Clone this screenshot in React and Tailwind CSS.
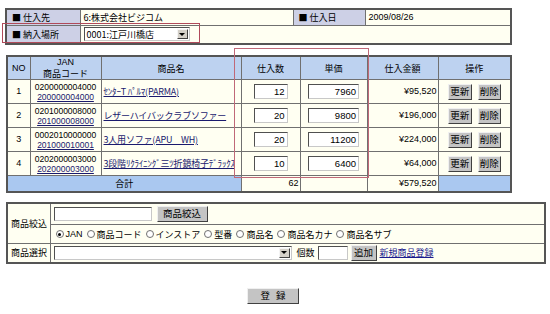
import React from "react";

const jp = { fontFamily: "'Noto Sans CJK JP', 'Liberation Sans', sans-serif" };

const rows = [
  { no: 1, jan: "0200000004000", code: "200000004000", name: "ｾﾝﾀｰT ﾊﾟﾙﾏ(PARMA)", qty: 12, price: 7960, amount: "¥95,520" },
  { no: 2, jan: "0201000008000", code: "201000008000", name: "レザーハイバックラブソファー", qty: 20, price: 9800, amount: "¥196,000" },
  { no: 3, jan: "0002010000000", code: "201000010001", name: "3人用ソファ(APU　WH)", qty: 20, price: 11200, amount: "¥224,000" },
  { no: 4, jan: "0202000003000", code: "202000003000", name: "3段階ﾘｸﾗｲﾆﾝｸﾞ三ﾂ折鏡椅子ﾃﾞﾗｯｸｽ", qty: 10, price: 6400, amount: "¥64,000" },
];

function Btn({ children, className = "" }) {
  return (
    <span
      className={`inline-flex items-center justify-center bg-[#c4c4c4] border border-t-[#f0f0f0] border-l-[#f0f0f0] border-r-[#404040] border-b-[#404040] text-[9.5px] leading-none text-black ${className}`}
    >
      {children}
    </span>
  );
}

function TextBox({ value = "", className = "" }) {
  return (
    <span
      className={`inline-flex items-center justify-end pr-[2px] bg-white border border-t-[#505050] border-l-[#505050] border-r-[#c8c8c8] border-b-[#c8c8c8] text-[9.5px] leading-none font-['Liberation_Sans'] ${className}`}
    >
      {value}
    </span>
  );
}

function SelectBox({ value, className = "" }) {
  return (
    <span
      className={`inline-flex items-center justify-between bg-white border border-t-[#505050] border-l-[#505050] border-r-[#c8c8c8] border-b-[#c8c8c8] text-[9px] leading-none ${className}`}
    >
      <span className="pl-[2px]">{value}</span>
      <span className="w-[11px] h-[10px] mr-[1px] bg-[#d4d0c8] border border-t-[#f4f4f4] border-l-[#f4f4f4] border-r-[#404040] border-b-[#404040] flex items-center justify-center">
        <span className="w-0 h-0 border-l-[3px] border-r-[3px] border-t-[3px] border-l-transparent border-r-transparent border-t-black" />
      </span>
    </span>
  );
}

function Radio({ checked, label }) {
  return (
    <span className="inline-flex items-center gap-[2px] mr-[4px] align-middle">
      <span className="w-[8px] h-[8px] rounded-full bg-white border border-[#707070] flex items-center justify-center">
        {checked && <span className="w-[3px] h-[3px] rounded-full bg-black" />}
      </span>
      <span>{label}</span>
    </span>
  );
}

const lbl = "bg-[#cdd0e6] border border-[#707070] px-[5px] py-0 text-left whitespace-nowrap";
const val = "bg-[#fffff2] border border-[#707070] px-[3px] py-0 text-left whitespace-nowrap";
const th = "bg-[#bdd2f0] border border-[#707070] p-0 font-normal text-center";
const td = "bg-[#fffff2] border border-[#707070] p-0";

export default function App() {
  return (
    <div className="relative w-[550px] h-[314px] bg-white text-[9px] leading-[11px] text-black overflow-hidden" style={jp}>
      <div className="pt-[8px] pl-[5px]">
        <table className="table-fixed border-collapse w-[505px] border-2 border-[#555]">
          <colgroup>
            <col className="w-[74px]" />
            <col className="w-[213px]" />
            <col className="w-[72px]" />
            <col className="w-[146px]" />
          </colgroup>
          <tbody>
            <tr className="h-[16px]">
              <td className={lbl}>■ 仕入先</td>
              <td className={val}>6:株式会社ビジコム</td>
              <td className={lbl}>■ 仕入日</td>
              <td className={`${val} font-['Liberation_Sans']`}>2009/08/26</td>
            </tr>
            <tr className="h-[19px]">
              <td className={lbl}>■ 納入場所</td>
              <td className={val} colSpan={3}>
                <SelectBox value="0001:江戸川橋店" className="w-[106px] h-[14px] align-middle" />
              </td>
            </tr>
          </tbody>
        </table>
      </div>

      <div className="pt-[10px] pl-[6px]">
        <table className="table-fixed border-collapse w-[504px] border-2 border-[#555]">
          <colgroup>
            <col className="w-[23px]" />
            <col className="w-[71px]" />
            <col className="w-[140px]" />
            <col className="w-[59px]" />
            <col className="w-[67px]" />
            <col className="w-[71px]" />
            <col className="w-[73px]" />
          </colgroup>
          <thead>
            <tr className="h-[22px]">
              <th className={`${th} font-['Liberation_Sans']`}>NO</th>
              <th className={`${th} leading-[11px]`}>
                <div className="font-['Liberation_Sans']">JAN</div>
                <div>商品コード</div>
              </th>
              <th className={th}>商品名</th>
              <th className={th}>仕入数</th>
              <th className={th}>単価</th>
              <th className={th}>仕入金額</th>
              <th className={th}>操作</th>
            </tr>
          </thead>
          <tbody>
            {rows.map((r) => (
              <tr key={r.no} className="h-[24px]">
                <td className={`${td} text-center font-['Liberation_Sans']`}>{r.no}</td>
                <td className={`${td} text-center text-[8.5px] leading-[10px] font-['Liberation_Sans']`}>
                  {r.jan}
                  <br />
                  <span className="underline text-[#1a1a6e]">{r.code}</span>
                </td>
                <td className={`${td} px-[2px] whitespace-nowrap overflow-hidden`}>
                  <span className="underline text-[#1a1a6e] text-[9px] tracking-[-0.2px]">{r.name}</span>
                </td>
                <td className={`${td} text-center`}>
                  <TextBox value={r.qty} className="w-[34px] h-[15px] align-middle" />
                </td>
                <td className={`${td} text-center`}>
                  <TextBox value={r.price} className="w-[51px] h-[15px] align-middle" />
                </td>
                <td className={`${td} text-right pr-[1px] font-['Liberation_Sans']`}>{r.amount}</td>
                <td className={`${td} text-center`}>
                  <span className="inline-flex gap-[6px] align-middle">
                    <Btn className="w-[24px] h-[16px]">更新</Btn>
                    <Btn className="w-[23px] h-[16px]">削除</Btn>
                  </span>
                </td>
              </tr>
            ))}
            <tr className="h-[16px]">
              <td className="bg-[#aac8f0] border border-[#707070] p-0 text-center" colSpan={3}>
                合計
              </td>
              <td className={`${td} text-right pr-[1px] font-['Liberation_Sans']`}>62</td>
              <td className={td}></td>
              <td className={`${td} text-right pr-[1px] font-['Liberation_Sans']`}>¥579,520</td>
              <td className="bg-[#aac8f0] border border-[#707070] p-0"></td>
            </tr>
          </tbody>
        </table>
      </div>

      <div className="pt-[9px] pl-[6px]">
        <table className="table-fixed border-collapse w-[538px] border-2 border-[#555]">
          <colgroup>
            <col className="w-[43px]" />
            <col className="w-[495px]" />
          </colgroup>
          <tbody>
            <tr className="h-[22px]">
              <td className={`${val} px-[1px]`} rowSpan={2}>
                商品絞込
              </td>
              <td className={val}>
                <span className="inline-flex items-center gap-[5px] align-middle">
                  <TextBox className="w-[98px] h-[14px]" />
                  <Btn className="w-[51px] h-[16px]">商品絞込</Btn>
                </span>
              </td>
            </tr>
            <tr className="h-[19px]">
              <td className={`${val} px-[5px]`}>
                <Radio checked label={<span className="font-['Liberation_Sans']">JAN</span>} />
                <Radio label="商品コード" />
                <Radio label="インストア" />
                <Radio label="型番" />
                <Radio label="商品名" />
                <Radio label="商品名カナ" />
                <Radio label="商品名サブ" />
              </td>
            </tr>
            <tr className="h-[19px]">
              <td className={`${val} px-[1px]`}>商品選択</td>
              <td className={val}>
                <span className="inline-flex items-center align-middle">
                  <SelectBox value="" className="w-[238px] h-[14px]" />
                  <span className="ml-[5px]">個数</span>
                  <TextBox className="w-[30px] h-[14px] ml-[3px]" />
                  <Btn className="w-[26px] h-[16px] ml-[3px]">追加</Btn>
                  <span className="ml-[3px] underline text-[#1a1a8e]">新規商品登録</span>
                </span>
              </td>
            </tr>
          </tbody>
        </table>
      </div>

      <div className="flex justify-center pt-[24px] pr-[4px]">
        <Btn className="w-[52px] h-[16px] tracking-[6px] pl-[6px]">登録</Btn>
      </div>

      <div className="absolute left-[2px] top-[23px] w-[198px] h-[20px] border border-[#b04a5a] pointer-events-none" />
      <div className="absolute left-[234px] top-[48px] w-[135px] h-[130px] border border-[#c06878] pointer-events-none" />
    </div>
  );
}
